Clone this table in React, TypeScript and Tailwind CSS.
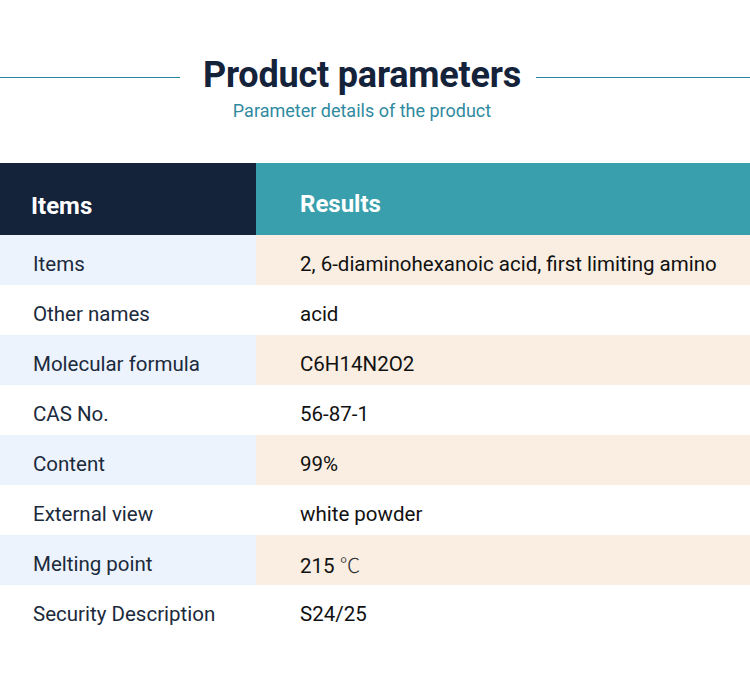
import React from "react";

const rows: [string, React.ReactNode][] = [
  ["Items", "2, 6-diaminohexanoic acid, first limiting amino"],
  ["Other names", "acid"],
  ["Molecular formula", "C6H14N2O2"],
  ["CAS No.", "56-87-1"],
  ["Content", "99%"],
  ["External view", "white powder"],
  [
    "Melting point",
    <>
      215{" "}
      <span className="font-light text-[#333]" style={{ fontFamily: "'Noto Sans CJK SC', sans-serif" }}>
        ℃
      </span>
    </>,
  ],
  ["Security Description", "S24/25"],
];

export default function App() {
  return (
    <div className="w-[750px] h-[686px] bg-white overflow-hidden" style={{ fontFamily: "Roboto, 'Noto Sans', sans-serif" }}>
      <div className="pt-[55px] flex items-start h-[163px]">
        <div className="h-px bg-[#2a87a0] w-[180px] mt-[22px]" />
        <div className="flex-1 flex flex-col items-center pl-[8px]">
          <h1 className="text-[36px] font-bold leading-[40px] text-[#14223a] whitespace-nowrap tracking-[-0.2px]">
            Product parameters
          </h1>
          <p className="mt-[7px] text-[18px] leading-[18px] text-[#2f8aa0] whitespace-nowrap">Parameter details of the product</p>
        </div>
        <div className="h-px bg-[#2a87a0] w-[214px] mt-[22px]" />
      </div>
      <div className="flex h-[72px]">
        <div className="w-[256px] bg-[#14223a] text-white font-bold text-[24px] leading-[24px] pl-[31px] pt-[31px]">Items</div>
        <div className="flex-1 bg-[#3a9fad] text-white font-bold text-[24px] leading-[24px] pl-[44px] pt-[29px]">Results</div>
      </div>
      {rows.map(([k, v], i) => (
        <div key={k} className="flex h-[50px] text-[20.5px] leading-[20px]">
          <div className={`w-[256px] h-full pt-[19px] pl-[33px] text-[#1b2a3c] ${i % 2 === 0 ? "bg-[#ecf3fc]" : "bg-white"}`}>{k}</div>
          <div className={`flex-1 h-full pt-[19px] pl-[44px] text-[#111] whitespace-nowrap ${i % 2 === 0 ? "bg-[#f9eee1]" : "bg-white"}`}>{v}</div>
        </div>
      ))}
    </div>
  );
}
